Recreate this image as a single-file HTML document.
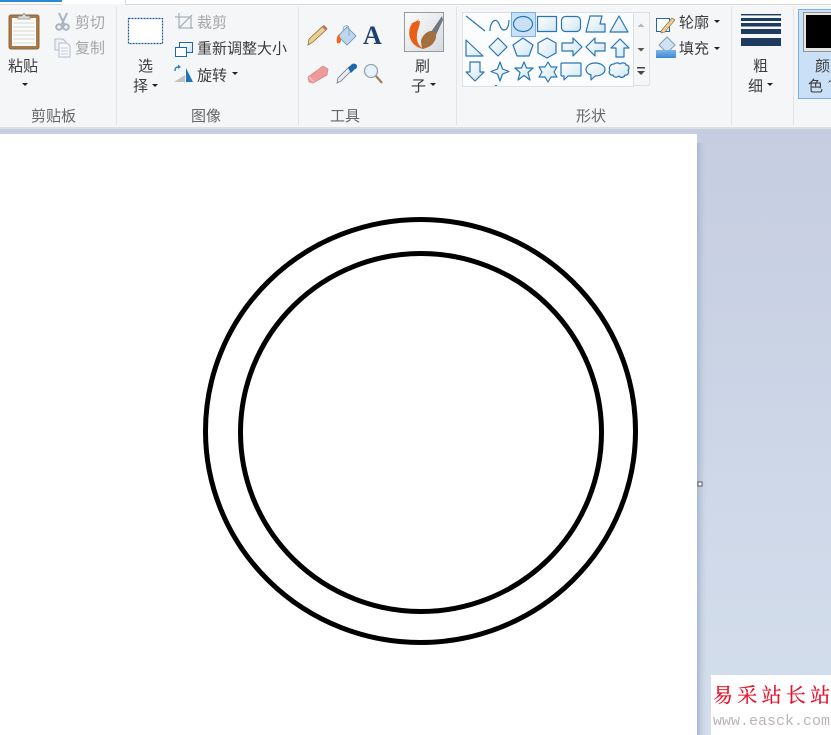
<!DOCTYPE html>
<html lang="zh"><head><meta charset="utf-8"><title>画图</title>
<style>
html,body{margin:0;padding:0;width:831px;height:735px;overflow:hidden;background:#fff}
svg{display:block}
text{font-family:"Liberation Sans","Noto Sans CJK SC",sans-serif;font-size:15px;fill:#3d3d3d}
.d{fill:#a6a6a6}.g{fill:#666}
.s{fill:url(#sf);stroke:#2a74b5;stroke-width:1.2;stroke-linejoin:round}
</style></head><body>
<svg width="831" height="735" viewBox="0 0 831 735" xmlns="http://www.w3.org/2000/svg">
<defs>
<linearGradient id="bg" x1="0" y1="0" x2="0" y2="1"><stop offset="0" stop-color="#c5cde0"/><stop offset="1" stop-color="#d4dfed"/></linearGradient>
<linearGradient id="sh" x1="0" y1="0" x2="1" y2="0"><stop offset="0" stop-color="#a9b7cc"/><stop offset="1" stop-color="#c6d0e1" stop-opacity="0"/></linearGradient>
<linearGradient id="sf" x1="0" y1="0" x2="1" y2="1"><stop offset="0" stop-color="#fff"/><stop offset="1" stop-color="#cfe6f3"/></linearGradient>
<linearGradient id="bu" x1="0" y1="0" x2="0" y2="1"><stop offset="0" stop-color="#7fb6e6"/><stop offset="1" stop-color="#3f8ad0"/></linearGradient>
<linearGradient id="rs" x1="0" y1="0" x2="1" y2="1"><stop offset="0" stop-color="#fff"/><stop offset="1" stop-color="#cfe4f3"/></linearGradient>
<linearGradient id="br" x1="0" y1="0" x2="1" y2="1"><stop offset="0" stop-color="#fbfbfa"/><stop offset="1" stop-color="#d5dbe3"/></linearGradient>
</defs>
<!-- workspace -->
<rect y="128" width="831" height="607" fill="url(#bg)"/>
<rect x="697" y="143" width="10" height="592" fill="url(#sh)"/>
<rect y="134" width="697" height="601" fill="#fff"/>
<rect x="698" y="482" width="4" height="4" fill="#fff" stroke="#555" stroke-width="1"/>
<ellipse cx="420.500" cy="431" rx="215" ry="211.500" fill="none" stroke="#000" stroke-width="5"/>
<ellipse cx="421" cy="432.500" rx="180.500" ry="179" fill="none" stroke="#000" stroke-width="5"/>
<!-- ribbon -->
<rect width="831" height="127" fill="#f5f6f7"/>
<rect y="127" width="831" height="2" fill="#dcdee4"/>
<rect width="831" height="4" fill="#fff"/>
<rect x="126" y="4" width="705" height="1" fill="#d9d9d9"/>
<rect x="0" y="4" width="62" height="1" fill="#d9d9d9"/>
<rect x="0" y="0" width="62" height="2" fill="#2b88d8"/>
<rect x="125" y="0" width="1" height="5" fill="#d9d9d9"/>
<g fill="#e1e3e6"><rect x="116" y="7" width="1" height="118"/><rect x="298" y="7" width="1" height="118"/><rect x="456" y="7" width="1" height="118"/><rect x="731" y="7" width="1" height="118"/><rect x="793" y="7" width="1" height="118"/></g>

<!-- clipboard -->
<rect x="9" y="15" width="30" height="34" rx="2" fill="#a87a45" stroke="#8f6636" stroke-width="1"/>
<rect x="12" y="18" width="24" height="28" fill="#fbfbf8"/>
<path d="M13 23h22M13 27h22M13 31h22M13 35h22M13 39h22M13 43h22" stroke="#d5d8dd" stroke-width="1"/>
<path d="M18 19v-3h4l1.500-2.500h1l1.500 2.500h4v3z" fill="#dcdcdc" stroke="#8a8a8a" stroke-width=".8"/>
<text x="8" y="71">粘贴</text>
<path d="M22 83h6l-3 3z" fill="#222"/>
<text x="31" y="121" class="g">剪贴板</text>
<path d="M59 13l6 13M67 13l-6 13" stroke="#a8b3c2" stroke-width="2" fill="none"/>
<circle cx="59" cy="27" r="2.800" fill="none" stroke="#a8b3c2" stroke-width="2"/><circle cx="66" cy="27" r="2.800" fill="none" stroke="#a8b3c2" stroke-width="2"/>
<text x="75" y="27.500" class="d">剪切</text>
<path d="M55 39h8l3 3v8H55z" fill="#eef2f6" stroke="#b4bdc9"/><path d="M59 43h8l3 3v11H59z" fill="#f7f9fb" stroke="#b4bdc9"/><path d="M61 48h7M61 51h7M61 54h7" stroke="#c5cdd7"/>
<text x="75" y="53" class="d">复制</text>

<!-- image -->
<rect x="128.500" y="18.500" width="34" height="25" fill="#fff" stroke="#1a5a9e" stroke-width="1.200" stroke-dasharray="2 1"/>
<text x="138" y="71">选</text><text x="133" y="91">择</text>
<path d="M152 84h6l-3 3z" fill="#222"/>
<path d="M175 17h16v12M179 13v15h14M179 28l13-13" fill="none" stroke="#a9b3bf" stroke-width="1.300"/>
<text x="197" y="27.500" class="d">裁剪</text>
<rect x="179.500" y="42.500" width="13" height="10" fill="url(#rs)" stroke="#1f68ad"/>
<rect x="175.500" y="47.500" width="11" height="9" fill="#fff" stroke="#1f68ad"/>
<text x="197" y="53.500">重新调整大小</text>
<path d="M175 71c0-3 1-4 4-4" fill="none" stroke="#2a7fd0" stroke-width="1.400"/><path d="M178 64.500l3 2.500-3 2z" fill="#2a7fd0"/>
<path d="M174 82l11-7v7z" fill="#c2c2c2"/><path d="M186 68v14h7z" fill="#1f74bd"/>
<text x="197" y="80.500">旋转</text>
<path d="M232 72h6l-3 3z" fill="#222"/>
<text x="191" y="121" class="g">图像</text>

<!-- tools -->
<path d="M309 39l14-13 4 3-14 13-5 3z" fill="#efd08a" stroke="#77653f" stroke-width=".7"/><path d="M322 27l2-2 3 3-2 2z" fill="#cf6a60"/>
<path d="M347 27l9 9-9 9-9-9z" fill="#bcd8ef" stroke="#5f8fb8" stroke-width=".8"/><path d="M343 30c0-5 6-6 6-1v7" fill="none" stroke="#8a9bad" stroke-width=".8"/><path d="M339 34c-2 2-3 6-2 9 2 1 4 0 4-3z" fill="#ea6b1f"/>
<text x="363" y="44" style="font-family:'Liberation Serif',serif;font-size:26px;font-weight:bold;fill:#1f3f6e">A</text>
<path d="M308 77l15-11 5 3-1 6-14 8-4-1z" fill="#ef9b9b" stroke="#d28080" stroke-width=".7"/>
<path d="M309 77l5 5" stroke="#f7c9c6" stroke-width="1.200"/>
<path d="M337 83l1-5 11-11 3 3-11 11z" fill="#e8edf2" stroke="#6f7f90" stroke-width=".8"/><path d="M348 68l4-4c2-1 5 0 5 2s-1 3-2 3l-4 4z" fill="#1d67ad"/>
<circle cx="371" cy="71" r="6.500" fill="#e8f2fb" stroke="#98a4b2" stroke-width="1.300"/><path d="M376 76l6 7" stroke="#a57d4e" stroke-width="2.200"/>
<text x="330" y="121" class="g">工具</text>

<!-- brush -->
<rect x="404.500" y="12.500" width="39" height="39" fill="url(#br)" stroke="#9a9a9a"/>
<path d="M431 32l11-16 1 4-7 15z" fill="#707580"/>
<path d="M421 42c0-5 6-12 12-11 4 2 4 7 1 11-3 5-8 6-12 7z" fill="#a56f3d"/>
<path d="M420 21l-6 1c-4 3-6 9-4 16 2 6 7 10 14 11-5-2-8-8-7-14 0-4 3-9 3-14z" fill="#ea5f17"/>
<path d="M410 24c3-1 6-2 9-5l-2 4z" fill="#ea5f17"/>
<text x="415" y="71">刷</text><text x="411" y="91">子</text>
<path d="M430 83h6l-3 3z" fill="#222"/>

<!-- shapes gallery -->
<rect x="462.500" y="12.500" width="171" height="74" fill="#fbfcfd" stroke="#dcdfe3"/>
<rect x="511.500" y="12.500" width="24" height="24" fill="#c9e0f7" stroke="#7ab0e8"/>
<g class="s">
<path d="M466 16l19 15" fill="none"/>
<path d="M490 31c0-8 4-12 7-10s3 9 7 9 5-6 5-10" fill="none"/>
<ellipse cx="523" cy="24" rx="9.500" ry="7.500" fill="none"/>
<rect x="537.500" y="16.500" width="19" height="15"/>
<rect x="561.500" y="16.500" width="19" height="15" rx="4"/>
<path d="M586 32l4-16h12l-2 8h5v8z"/>
<path d="M610 32l9-16 9 16z"/>
<path d="M466 40v16h17z"/>
<path d="M498 38l9 9-9 9-9-9z"/>
<path d="M523 38l10 7-4 11h-12l-4-11z"/>
<path d="M547 38l9 5v10l-9 5-9-5V43z"/>
<path d="M562 43h11v-5l9 9-9 9v-5h-11z"/>
<path d="M605 43h-10v-5l-9 9 9 9v-5h10z"/>
<path d="M620 39l9 9h-5v9h-8v-9h-5z"/>
<path d="M470 62h10v10h4l-9 9-9-9h4z"/>
<path d="M500 62l2.500 7 6.500 2.500-6.500 2.500-2.500 7-2.500-7-6.500-2.500 6.500-2.500z"/>
<path d="M524 62l2.500 6h6.500l-5 4.500 2 7.500-6-4.500-6 4.500 2-7.500-5-4.500h6.500z"/>
<path d="M548 62l3 5h6l-3 5 3 5h-6l-3 5-3-5h-6l3-5-3-5h6z"/>
<path d="M562 63h18a1 1 0 0 1 1 1v11a1 1 0 0 1-1 1h-12l-4 4v-4h-2a1 1 0 0 1-1-1V64a1 1 0 0 1 1-1z"/>
<path d="M595 63c6 0 10 3 10 6.500s-4 6.500-10 6.500l-4 4v-5c-3-1-5-3-5-5.500 0-3.500 4-6.500 9-6.500z"/>
<path d="M614 64c2-2 5-1 6 0 2-2 6-1 6 1 3 0 4 4 2 5 2 3-1 6-3 5-1 3-5 3-6 1-2 2-6 1-6-1-3 1-5-3-3-5-2-3 1-6 4-6z"/>
</g>
<rect x="495" y="85" width="2" height="1" fill="#2a74b5"/>
<rect x="633.500" y="12.500" width="16" height="73" fill="#f5f6f7" stroke="#dcdfe3"/>
<path d="M637.500 27l3.500-3.500 3.500 3.500z" fill="#b5b8bd"/><path d="M637.500 48h7l-3.500 3.500z" fill="#555"/>
<rect x="637" y="67" width="8" height="1.500" fill="#444"/><path d="M637 71h8l-4 4z" fill="#444"/>
<text x="576" y="121" class="g">形状</text>

<path d="M656.500 18.500h13v13h-13z" fill="#fff" stroke="#1f68ad"/>
<path d="M661 31l11-13 3 2-10 12-4 1z" fill="#efd08a" stroke="#77653f" stroke-width=".6"/>
<text x="679" y="27.500">轮廓</text>
<path d="M714 20h6l-3 3z" fill="#222"/>
<path d="M667 37l8 8-8 8-8-8z" fill="#cfe2f2" stroke="#7f9fbd"/>
<rect x="656" y="50" width="20" height="8" fill="url(#bu)"/>
<text x="679" y="53.500">填充</text>
<path d="M714 47h6l-3 3z" fill="#222"/>

<!-- size -->
<g fill="#1f3a5f"><rect x="741" y="14" width="40" height="1.400"/><rect x="741" y="18" width="40" height="3"/><rect x="741" y="23" width="40" height="3.500"/><rect x="741" y="29" width="40" height="5"/><rect x="741" y="38" width="40" height="8"/></g>
<text x="753" y="71">粗</text><text x="748" y="91">细</text>
<path d="M767 83h6l-3 3z" fill="#222"/>

<!-- color1 -->
<rect x="798.500" y="9.500" width="40" height="89" fill="#c9e0f7" stroke="#7ab0e8"/>
<rect x="803.500" y="12.500" width="35" height="39" fill="#e4e4e4" stroke="#949494"/>
<rect x="806" y="15" width="30" height="33" fill="#000"/>
<text x="815" y="71">颜</text><text x="808" y="91">色</text>
<path d="M828 83l2-3 1 1z" fill="#333"/>

<!-- watermark -->
<rect x="711" y="675" width="120" height="60" fill="#fff"/>
<text x="713" y="702" style="font-family:'Liberation Serif','Noto Serif CJK SC',serif;font-size:20px;letter-spacing:4.300px;fill:#e8102a;stroke:#e8102a;stroke-width:.25">易采站长站</text>
<text x="713" y="725" style="font-family:'Liberation Mono',monospace;font-size:15px;fill:#bdb3b8">www.easck.com</text>
</svg>
</body></html>
